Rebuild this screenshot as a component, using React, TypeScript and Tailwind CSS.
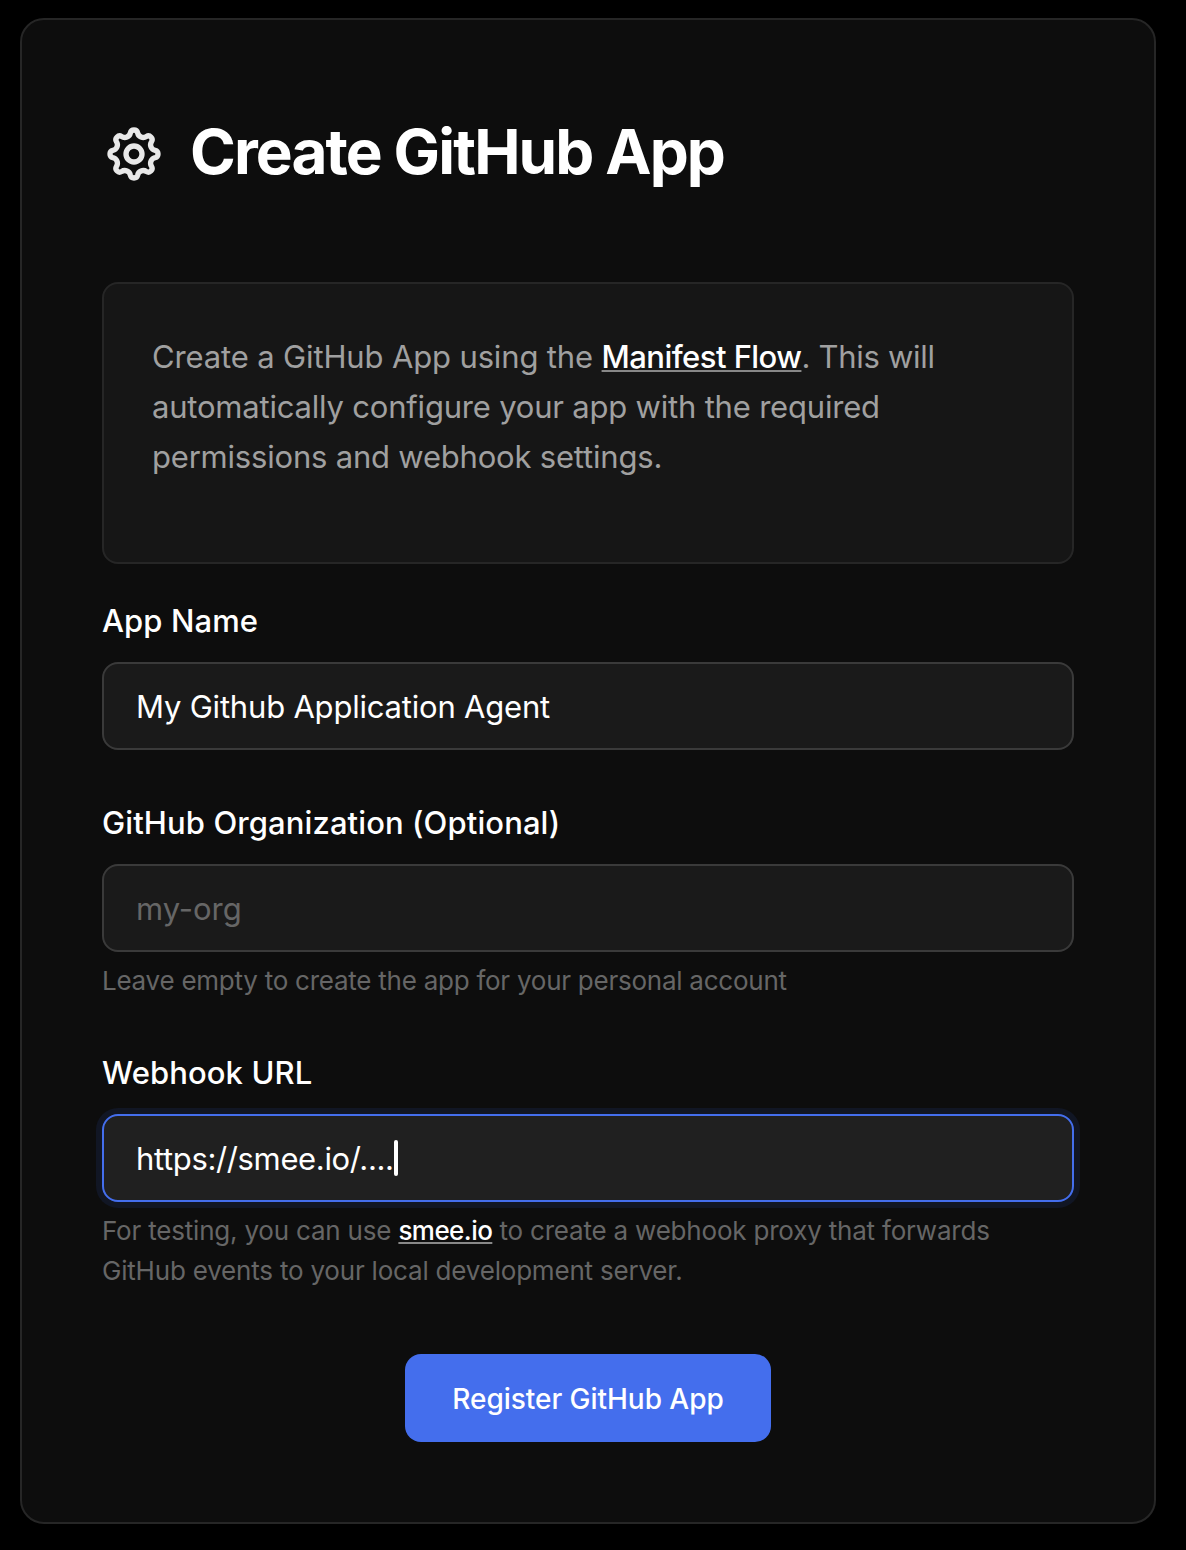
import type { ReactNode } from "react";

const TEETH = 8;
const TOOTH_RADIUS = 8.05;
const TOOTH_HALF_ANGLE = 0.17;

function gearPoint(angle: number) {
  return `${(12 + TOOTH_RADIUS * Math.cos(angle)).toFixed(3)} ${(12 + TOOTH_RADIUS * Math.sin(angle)).toFixed(3)}`;
}

// Outline of alternating round teeth and wider, shallow valleys.
const gearPath = Array.from({ length: TEETH }, (_, i) => {
  const angle = (i * 2 * Math.PI) / TEETH - Math.PI / 2;
  const next = angle + (2 * Math.PI) / TEETH;
  const start = i === 0 ? `M${gearPoint(angle - TOOTH_HALF_ANGLE)}` : "";
  return `${start}A1.4 1.4 0 0 1 ${gearPoint(angle + TOOTH_HALF_ANGLE)}A2.15 2.15 0 0 0 ${gearPoint(next - TOOTH_HALF_ANGLE)}`;
}).join("") + "Z";

function GearIcon() {
  return (
    <svg className="size-16 shrink-0 text-[#e8e8e8]" viewBox="0 0 24 24" fill="none" stroke="currentColor" strokeWidth="2" strokeLinecap="round" strokeLinejoin="round">
      <path d={gearPath} />
      <circle cx="12" cy="12" r="3" />
    </svg>
  );
}

function Label({ children }: { children: ReactNode }) {
  return <label className="block h-10 pt-px text-[31px] leading-10 font-medium tracking-[0.1px] whitespace-nowrap text-white">{children}</label>;
}

const field = "mt-[22px] flex h-[88px] items-center rounded-2xl border-2 px-8 pt-0.5 text-[31px] leading-10 whitespace-nowrap";
const hint = "mt-[9px] text-[26px] leading-10 text-[#666666] whitespace-nowrap";
const link = "font-medium text-white underline decoration-[#888888] decoration-2 underline-offset-[2px] [text-decoration-skip-ink:none]";

export default function App() {
  return (
    <main className="h-[1550px] w-[1186px] bg-black pt-[18px] pl-5 font-['Inter',sans-serif]">
      <section className="h-[1506px] w-[1136px] rounded-[24px] border-2 border-[#262626] bg-[#0d0d0d] px-20 pt-[102px]">
        <h1 className="flex h-16 items-center gap-6 text-[62px] leading-[62px] font-bold tracking-[-1.89px] text-white">
          <GearIcon />
          <span className="pb-1 whitespace-nowrap">Create GitHub App</span>
        </h1>
        <div className="mt-24 h-[282px] rounded-2xl border-2 border-[#262626] bg-[#161616] px-12 pt-12 text-[31px] leading-[50px] whitespace-nowrap text-[#a0a0a0]">
          <p className="tracking-[-0.2px]">
            <span className="tracking-[-0.14px]">Create a GitHub App using the </span>
            <a className={`${link} tracking-[-0.55px]`}>Manifest Flow</a>
            <span className="tracking-[-0.3px]">. This will</span>
            <br />
            automatically configure your app with the required
            <br />
            permissions and webhook settings.
          </p>
        </div>
        <div className="mt-9">
          <Label>App Name</Label>
          <div className={`${field} border-[#3a3a3a] bg-[#1a1a1a] tracking-[-0.2px] text-white`}>My Github Application Agent</div>
        </div>
        <div className="mt-[52px]">
          <Label>GitHub Organization (Optional)</Label>
          <div className={`${field} border-[#3a3a3a] bg-[#1a1a1a] tracking-[-0.05px] text-[#666666]`}>my-org</div>
          <p className={`${hint} tracking-[-0.25px]`}>Leave empty to create the app for your personal account</p>
        </div>
        <div className="mt-[51px]">
          <Label>Webhook URL</Label>
          <div className={`${field} border-[#446eed] bg-[#202020] tracking-[-0.36px] text-white shadow-[0_0_0_6px_#111624]`}>
            https://smee.io/....
            <span className="mb-0.5 h-9 w-1 rounded-sm bg-white" />
          </div>
          <p className={`${hint} tracking-[-0.2px]`}>
            For testing, you can use <a className={`${link} tracking-[-0.55px]`}>smee.io</a> to create a webhook proxy that forwards
            <br />
            GitHub events to your local development server.
          </p>
        </div>
        <button className="mx-auto mt-[63px] flex h-[88px] w-[366px] items-center justify-center rounded-2xl bg-[#446eed] pt-0.5 text-[28px] font-medium tracking-[-0.04px] whitespace-nowrap text-white">
          Register GitHub App
        </button>
      </section>
    </main>
  );
}
